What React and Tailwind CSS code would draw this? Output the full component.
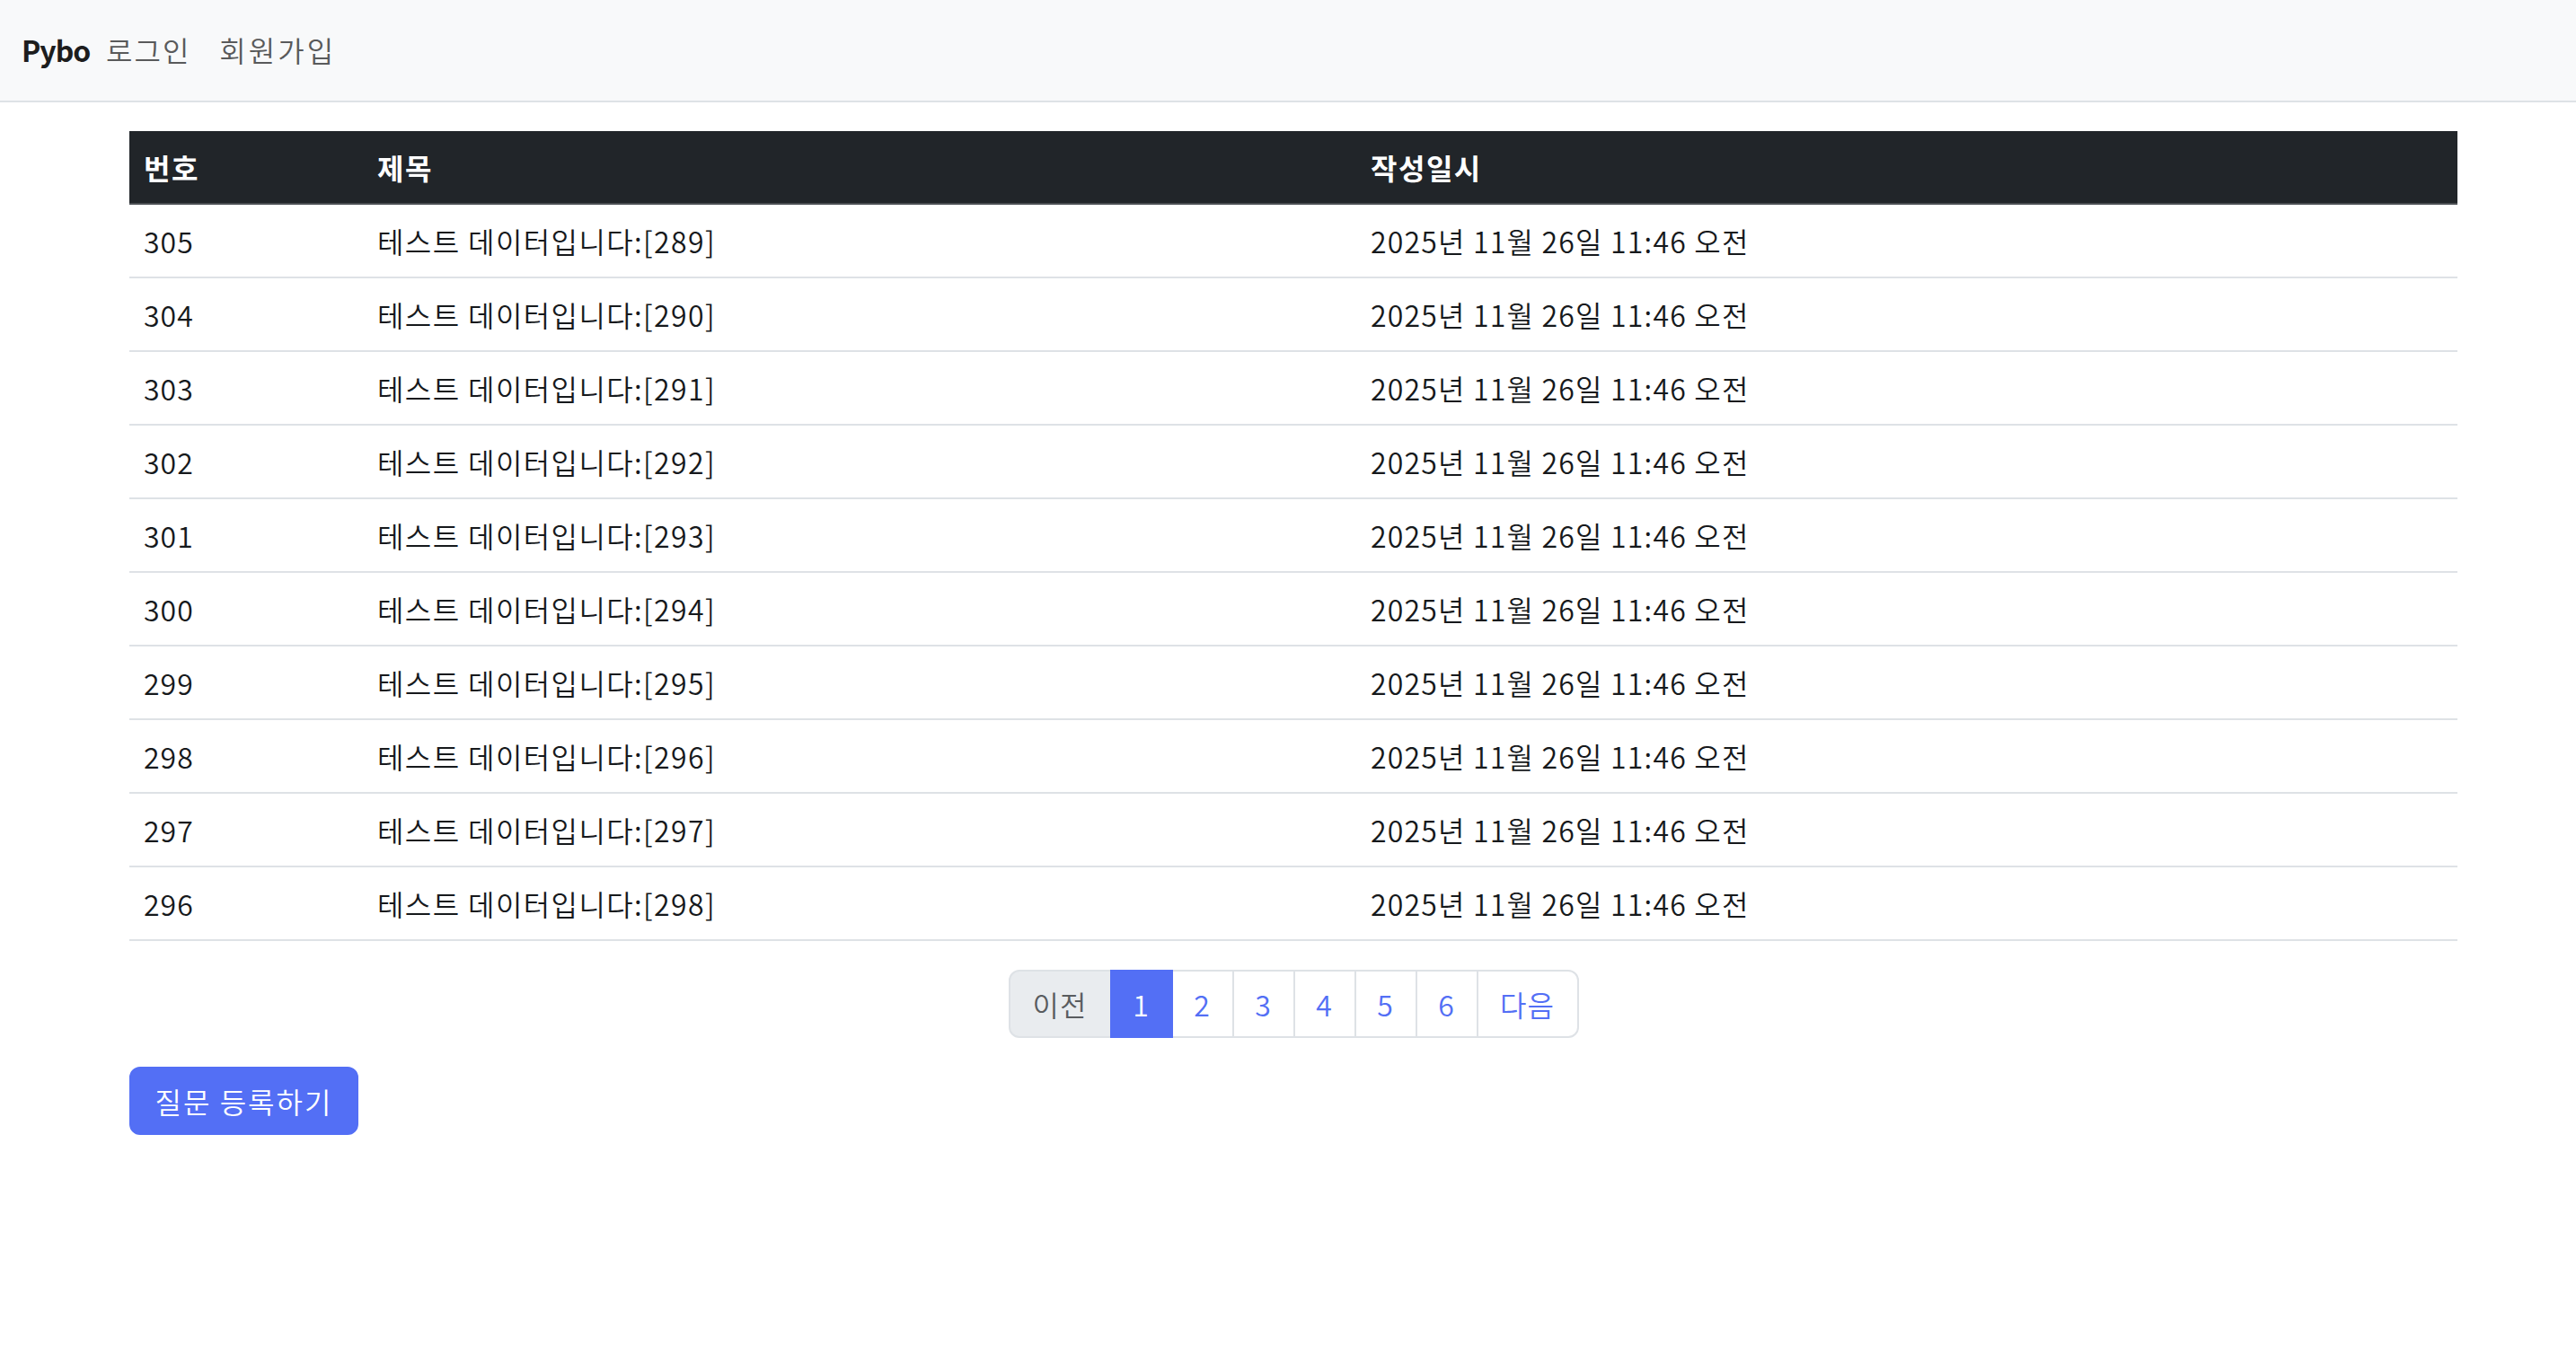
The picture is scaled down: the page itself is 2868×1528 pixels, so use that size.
import React from "react";

const rows = [
  [305, 289], [304, 290], [303, 291], [302, 292], [301, 293],
  [300, 294], [299, 295], [298, 296], [297, 297], [296, 298],
];

export default function App() {
  return (
    <div className="min-h-[1528px] w-[2868px] bg-white font-['Noto_Sans_CJK_KR','Noto_Sans',sans-serif] text-[32px] leading-[48px] tracking-[1px] text-[#212529]">
      <nav className="flex h-[114px] items-center border-b-2 border-[#dee2e6] bg-[#f8f9fa] px-[24px] pb-[2px]">
        <a className="w-[78px] font-bold tracking-[-1px] text-[#1d1d1d]">Pybo</a>
        <a className="px-[16px] font-[350] tracking-[2px] text-[#595a5b]">로그인</a>
        <a className="px-[16px] font-[350] tracking-[3px] text-[#595a5b]">회원가입</a>
      </nav>

      <div className="ml-[144px] mt-[32px] w-[2592px]">
        <div className="grid grid-cols-[260px_1106px_1226px] border-b-2 border-[#4a4e52] bg-[#212529] font-bold tracking-[1.5px] text-white">
          <div className="px-[16px] py-[16px]">번호</div>
          <div className="px-[16px] py-[16px]">제목</div>
          <div className="px-[16px] py-[16px]">작성일시</div>
        </div>
        {rows.map(([n, d]) => (
          <div
            key={n}
            className="grid grid-cols-[260px_1106px_1226px] border-b-2 border-[#dee2e6] font-[350] text-[#16191c]"
          >
            <div className="px-[16px] py-[16px]">{n}</div>
            <div className="px-[16px] py-[16px] tracking-[1.4px]">테스트 데이터입니다:[{d}]</div>
            <div className="px-[16px] py-[16px] tracking-[1.2px]">2025년 11월 26일 11:46 오전</div>
          </div>
        ))}

        <div className="mt-[32px] flex justify-center font-[350]">
          <div className="flex">
            <span className="relative flex h-[76px] w-[115px] items-center justify-center rounded-l-[12px] border-2 border-[#dee2e6] bg-[#e9ecef] text-[#595c5f]">
              이전
            </span>
            <span className="relative z-10 -ml-[2px] flex h-[76px] w-[70px] items-center justify-center border-2 border-[#536ff5] bg-[#536ff5] text-white">
              1
            </span>
            {[2, 3, 4, 5, 6].map((p) => (
              <span
                key={p}
                className="relative -ml-[2px] flex h-[76px] w-[70px] items-center justify-center border-2 border-[#dee2e6] bg-white text-[#536ff5]"
              >
                {p}
              </span>
            ))}
            <span className="relative -ml-[2px] flex h-[76px] w-[114px] items-center justify-center rounded-r-[12px] border-2 border-[#dee2e6] bg-white text-[#536ff5]">
              다음
            </span>
          </div>
        </div>

        <button className="mt-[32px] flex h-[76px] w-[255px] items-center justify-center rounded-[12px] border-2 border-[#536ff5] bg-[#536ff5] font-[350] tracking-[2px] text-white">
          질문 등록하기
        </button>
      </div>
    </div>
  );
}
